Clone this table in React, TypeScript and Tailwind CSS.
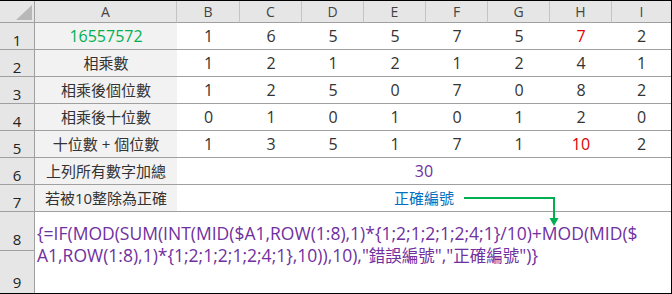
const cols = ['A', 'B', 'C', 'D', 'E', 'F', 'G', 'H', 'I'];

type Cell = { v: string; red?: boolean };

const rows: { label: string; labelColor?: string; cells?: Cell[]; merged?: { v: string; color: string } }[] = [
  { label: '16557572', labelColor: 'text-[#00b050] text-[16px]', cells: [{ v: '1' }, { v: '6' }, { v: '5' }, { v: '5' }, { v: '7' }, { v: '5' }, { v: '7', red: true }, { v: '2' }] },
  { label: '相乘數', cells: [{ v: '1' }, { v: '2' }, { v: '1' }, { v: '2' }, { v: '1' }, { v: '2' }, { v: '4' }, { v: '1' }] },
  { label: '相乘後個位數', cells: [{ v: '1' }, { v: '2' }, { v: '5' }, { v: '0' }, { v: '7' }, { v: '0' }, { v: '8' }, { v: '2' }] },
  { label: '相乘後十位數', cells: [{ v: '0' }, { v: '1' }, { v: '0' }, { v: '1' }, { v: '0' }, { v: '1' }, { v: '2' }, { v: '0' }] },
  { label: '十位數 + 個位數', cells: [{ v: '1' }, { v: '3' }, { v: '5' }, { v: '1' }, { v: '7' }, { v: '1' }, { v: '10', red: true }, { v: '2' }] },
  { label: '上列所有數字加總', merged: { v: '30', color: 'text-[#7030a0] text-[16px]' } },
  { label: '若被10整除為正確', merged: { v: '正確編號', color: 'text-[#0070c0]' } },
];

export default function App() {
  return (
    <div
      className="relative w-[672px] h-[294px] overflow-hidden bg-white border-t border-r border-b border-black text-[15px] text-[#333]"
      style={{ fontFamily: '"Open Sans", "Noto Sans CJK TC", sans-serif' }}
    >
      <div className="grid grid-cols-[35px_142px_63px_62px_62px_62px_62px_62px_62px_1fr] grid-rows-[22px_repeat(7,27px)_39px_1fr] h-full">
        {/* header row */}
        <div className="relative bg-[#e6e6e6] border-r border-b border-[#a0a0a0]">
          <svg className="absolute right-[2px] bottom-[2px]" width="16" height="15" viewBox="0 0 16 15">
            <polygon points="16,0 16,15 0,15" fill="#b8b8b8" />
          </svg>
        </div>
        {cols.map((c, i) => (
          <div
            key={c}
            className={`flex items-center justify-center bg-[#e6e6e6] border-b border-[#a0a0a0] text-[14px] text-[#444] ${i < cols.length - 1 ? 'border-r border-r-[#c4c4c4]' : ''}`}
          >
            {c}
          </div>
        ))}

        {/* data rows */}
        {rows.map((r, ri) => [
          <div key={`h${ri}`} className="flex items-end justify-center bg-[#e6e6e6] border-r border-b border-[#a0a0a0] leading-[18px] text-[#222]">
            {ri + 1}
          </div>,
          <div key={`a${ri}`} className={`flex items-center justify-center bg-[#f2f2f2] border-b border-[#a0a0a0] ${r.labelColor ?? ''}`}>
            {r.label}
          </div>,
          r.cells
            ? r.cells.map((c, ci) => (
                <div key={`c${ri}-${ci}`} className={`flex items-center justify-center border-b border-[#a0a0a0] text-[16px] ${c.red ? 'text-[#e00000]' : ''}`}>
                  {c.v}
                </div>
              ))
            : (
              <div key={`m${ri}`} className={`col-span-8 flex items-center justify-center border-b border-[#a0a0a0] ${r.merged!.color}`}>
                {r.merged!.v}
              </div>
            ),
        ])}

        {/* rows 8 & 9 */}
        <div className="col-start-1 row-start-9 flex items-end justify-center pb-[2px] bg-[#e6e6e6] border-r border-b border-[#a0a0a0] leading-[18px] text-[#222]">8</div>
        <div className="col-start-1 row-start-10 flex items-end justify-center pb-[2px] bg-[#e6e6e6] border-r border-[#a0a0a0] leading-[18px] text-[#222]">9</div>
        <div className="col-start-2 col-span-9 row-start-9 row-span-2 pl-[2px] pt-[10px] text-[17.5px] leading-[22px] text-[#7030a0] whitespace-nowrap">
          <div>{'{=IF(MOD(SUM(INT(MID($A1,ROW(1:8),1)*{1;2;1;2;1;2;4;1}/10)+MOD(MID($'}</div>
          <div>
            {'A1,ROW(1:8),1)*{1;2;1;2;1;2;4;1},10)),10),"'}
            <span className="text-[16.5px]">錯誤編號</span>
            {'","'}
            <span className="text-[16.5px]">正確編號</span>
            {'")}'}
          </div>
        </div>
      </div>

      {/* green arrow */}
      <svg className="absolute left-0 -top-px pointer-events-none" width="672" height="294" viewBox="0 0 672 294">
        <rect x="464" y="197" width="91" height="2" fill="#00b050" />
        <rect x="553" y="197" width="2" height="22" fill="#00b050" />
        <polygon points="549.5,218 558.5,218 554,226" fill="#00b050" />
      </svg>
    </div>
  );
}
